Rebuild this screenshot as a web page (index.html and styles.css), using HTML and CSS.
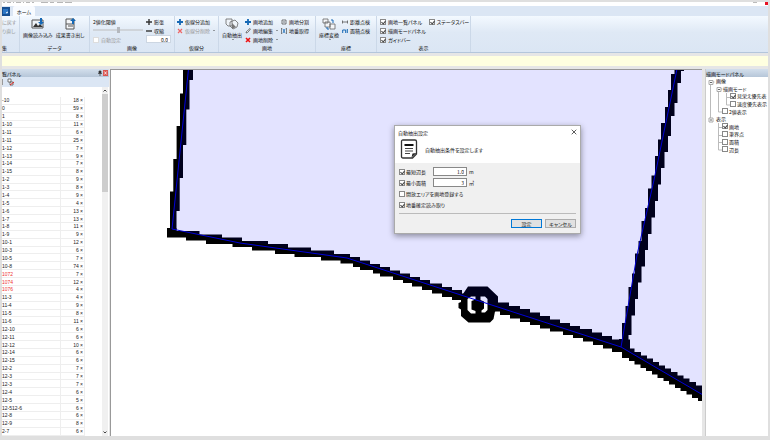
FILE: index.html
```html
<!DOCTYPE html>
<html lang="ja">
<head>
<meta charset="utf-8">
<title>自動抽出設定</title>
<link rel="stylesheet" href="styles.css">
</head>
<body>
<div class="app">
  <div class="titlebar">
    <svg class="title-marks" viewBox="0 0 72 2" aria-hidden="true"><path d="M1 .5h2M5 .5h4M11 .5h1M14 .5h5M21 .5h1M24 .5h4M30 .5h2M39 .5h7M48 .5h4M55 .5h6M63 .5h7" stroke="#888"/></svg>
    <span class="minimise"></span><span class="quit"></span>
  </div>
  <nav class="tabs"><button class="app-menu" aria-label="メニュー"><svg viewBox="0 0 8 9"><path d="M1 2h5v5H1z" fill="#2c76c5"/><path d="M4 6l2-1" stroke="#fff"/></svg></button><button class="tab">ホーム</button></nav>

  <div class="ribbon">
    <section class="group g-edit">
      <div class="stack faded"><button>に戻す</button><button>り直し</button></div>
      <h2>集</h2>
    </section>
    <section class="group g-data">
      <div class="tools">
        <button class="big"><svg viewBox="0 0 14 12"><path d="M1 2h11v8H1z" fill="#eef3f8" stroke="#555"/><path d="M2 9l3-4 2 3 2-2 3 3z" fill="#333"/><path d="M9 0h2v4h2l-3 3-3-3h2z" fill="#1769b5"/></svg>画像読み込み</button>
        <button class="big"><svg viewBox="0 0 14 12"><path d="M3 1h8v10H3z" fill="#f4f6f8" stroke="#555"/><path d="M3 6h8M5 8h5" stroke="#555"/><path d="M10 0l3 3h-2v3H9V3H7z" fill="#1769b5"/></svg>成果書き出し</button>
      </div>
      <h2>データ</h2>
    </section>
    <section class="group g-image">
      <div class="tools">
        <div class="stack slider-box"><label for="level">2値化閾値</label><input id="level" type="range" value="50"><label class="check faded"><input type="checkbox" disabled>自動設定</label></div>
        <div class="stack grow-box">
          <button><svg viewBox="0 0 6 6"><path d="M3 0v6M0 3h6" stroke="#333" stroke-width="1.4"/></svg>膨張</button>
          <button><svg viewBox="0 0 6 6"><path d="M0 3h6" stroke="#333" stroke-width="1.4"/></svg>収縮</button>
          <input class="spin" type="text" value="0.0" aria-label="値">
        </div>
      </div>
      <h2>画像</h2>
    </section>
    <section class="group g-line">
      <div class="stack">
        <button><svg viewBox="0 0 6 6"><path d="M3 0v6M0 3h6" stroke="#1769b5" stroke-width="1.8"/></svg>仮線分追加</button>
        <button class="faded"><svg viewBox="0 0 6 6"><path d="M1 1l4 4M5 1L1 5" stroke="#e66" stroke-width="1.2"/></svg>仮線分削除<i class="caret"></i></button>
      </div>
      <h2>仮線分</h2>
    </section>
    <section class="group g-lot">
      <div class="tools">
        <button class="big"><svg viewBox="0 0 14 12"><path d="M1 1h6v7H3L1 6zM5 4l5-2 3 3-1 4-4 2-3-3z" fill="#eef3f8" stroke="#666" stroke-width=".8"/><path d="M7 5v6l4-2z" fill="#777"/></svg>自動抽出<i class="caret"></i></button>
        <div class="stack">
          <button><svg viewBox="0 0 6 6"><path d="M3 0v6M0 3h6" stroke="#1769b5" stroke-width="1.8"/></svg>画地追加</button>
          <button><svg viewBox="0 0 6 6"><path d="M1 5l.5-1.500L5 .5l.6.6L2.500 4.600z" fill="#fff" stroke="#444" stroke-width=".7"/></svg>画地編集<i class="caret"></i></button>
          <button><svg viewBox="0 0 6 6"><path d="M1 1l4 4M5 1L1 5" stroke="#e11" stroke-width="1.6"/></svg>画地削除<i class="caret"></i></button>
        </div>
        <div class="stack">
          <button><svg viewBox="0 0 6 6"><path d="M3 0v6M2 1H1v4h1M4 1h1v4H4" fill="none" stroke="#555" stroke-width=".8"/></svg>画地分割</button>
          <button><svg viewBox="0 0 6 6"><path d="M1.500 0H.5v6h1M4.500 0h1v6h-1" fill="none" stroke="#555" stroke-width=".7"/><path d="M2 1l2 4M4 1L2 5" stroke="#1769b5" stroke-width=".8"/></svg>地番取得</button>
        </div>
      </div>
      <h2>画地</h2>
    </section>
    <section class="group g-coord">
      <div class="tools">
        <button class="big"><svg viewBox="0 0 14 12"><path d="M1 1h5v4H1zM3 4h5v5H3zM8 6h5v5H8z" fill="#f4f6f8" stroke="#666" stroke-width=".8"/><path d="M9 2h2v3M5 9v2h2" fill="none" stroke="#1769b5"/></svg>座標変換<i class="caret"></i></button>
        <div class="stack">
          <button><svg viewBox="0 0 6 6"><path d="M.5 1.500v3M5.500 1.500v3M.5 3h5" stroke="#555" stroke-width=".8"/></svg>距離点検</button>
          <button><svg viewBox="0 0 6 6"><path d="M.7 5V2h3v3M5.300 5V1" fill="none" stroke="#1769b5"/></svg>面積点検</button>
        </div>
      </div>
      <h2>座標</h2>
    </section>
    <section class="group g-view">
      <div class="tools">
        <div class="stack">
          <label class="check"><input type="checkbox" checked>画地一覧パネル</label>
          <label class="check"><input type="checkbox" checked>描画モードパネル</label>
          <label class="check"><input type="checkbox" checked>ガイドバー</label>
        </div>
        <div class="stack"><label class="check"><input type="checkbox" checked>ステータスバー</label></div>
      </div>
      <h2>表示</h2>
    </section>
  </div>
  <div class="guide"></div>

  <main class="work">
    <aside class="list-panel">
      <header class="panel-head"><span>覧パネル</span><svg viewBox="0 0 10 6"><path d="M1 1h2v2H1zM0 3.500h4M2 3.500V6" stroke="#333" stroke-width=".7" fill="#333"/><path d="M5 0h5v6H5z" fill="#d9534f"/><path d="M6.300 1.500l2.400 3M8.700 1.500l-2.400 3" stroke="#fff" stroke-width=".8"/></svg></header>
      <div class="list-tools"><svg viewBox="0 0 12 8"><path d="M.5 1v6" stroke="#999"/><path d="M6 1h3v3H6zM8 4h3v3H8z" fill="#fff" stroke="#555" stroke-width=".8"/><path d="M8 7l4-3" stroke="#d22"/></svg></div>
      <div class="list-body">
        <div class="sheet">
          <table>
            <tbody id="rows"></tbody>
          </table>
        </div>
        <div class="scroll"><svg viewBox="0 0 6 6"><path d="M1.500 4L3 2.500 4.500 4" fill="none" stroke="#444"/></svg><div class="thumb"></div><svg viewBox="0 0 6 6"><path d="M1.500 2L3 3.500 4.500 2" fill="none" stroke="#444"/></svg></div>
      </div>
    </aside>

    <section class="map">
      <svg class="drawing" viewBox="111 70 591 366" preserveAspectRatio="xMinYMin slice" aria-label="図面">
        <g class="ink">
          <path d="M183 69H193V80H189.500V109.500H186.300V145H183V178H179.700V211H176.500V232H170V191.500H173.300V159H176.600V126H180V93.500H183Z"/>
          <path d="M167 228H176.500V231H199.500V234.500H222V237.500H242V241H268V244H288V247.500H311V250.500H334V254H350V257H360V260.500H370V264H380V267H390V270.500H400V273.500H410V277H420V280H430V283.500H442V287H452V290H462V293.500H467V300H452V297H442V293.500H432V290H422V286.500H412V283H403V280H393V276.500H380V273.500H373V270H360V267H353V263.500H340.500V260.500H321V257H294.500V254H275V250.500H252V247H232.500V244H206V240.500H186V237.500H167Z"/>
          <path d="M493 299H498V302.500H509V306H520V309H530V312.500H540V316H550V319.500H560V323H570V326H580V329H592V332.500H602V336H612V339.500H630V352H612V348.500H603V345H593V341.500H583V338H573V335H563V331.500H550V328.500H540V325H530V322H520V318.500H510V315H500V311.500H493Z"/>
          <path d="M674.500 69H684V71H681V83H677.500V103H674.500V116H671V136H668V152H664.500V168H661V184.500H658V201H655V217.500H651.500V234H648V250H645V266.500H641.500V282.500H638V299H635V315.500H631.500V335H628.500V352H619V339H622V323H625.500V306H628.500V287H632V273.500H635V253.500H638.500V241H641.500V221H645V208H648V188.500H651.500V175.500H655V156H658V139.500H661V123H665V107H668V90H671V74H674.500Z"/>
          <path d="M622 345H628.500V348.500H634.500V352H641V355.500H647V358.500H653V362H659V365.500H665V368.500H671V372H677.500V375.500H683.500V378.500H689.500V382H696V385.500H703V401H698V398H692V394.500H686.500V391H680.500V388H675V384.500H669V381H663.500V378H657.500V374.500H652V371H646V368H640.500V364.500H634.500V361H629V358H622Z"/>
          <path fill-rule="evenodd" d="M468 286.500H487.500L498 296.500V303L499 308L495 311.500L493.500 319L490 322.500H468.500L461 316V309.500L458.500 308V303L461 302V297ZM467.500 299L471 296.500H475.500V299.500L471.500 301V309.500L475.500 311V313.500H471L467.500 310ZM480.500 296.500H485L487.500 299V310L485 312.500H481.500V310.500L484 308.500V301.500L480.500 300Z"/>
        </g>
        <path class="lot" d="M188 69L172 229L350 259L621 347L703 395V69Z"/>
        <path class="edge" d="M188.500 69L172 229L240 243L347 258L470 298L621 347L703 395M677 69L654 180L637 255L621 347"/>
      </svg>
      <form class="dialog" role="dialog" aria-label="自動抽出設定">
        <header class="dialog-head">
          <div class="dialog-title"><span>自動抽出設定</span><button type="button" class="close" aria-label="閉じる"><svg viewBox="0 0 6 6"><path d="M.7.7l4.600 4.600M5.300.7L.7 5.300" stroke="#333" stroke-width=".8"/></svg></button></div>
          <div class="intro"><svg viewBox="0 0 18 20"><path d="M3 1h12q1.500 0 1.500 1.500V15l-4 4H3q-1.500 0-1.500-1.500v-15Q1.500 1 3 1z" fill="#fff" stroke="#333" stroke-width="1.300"/><path d="M4.500 5h9v2h-9z" fill="#111"/><path d="M5 9.500h8M5 12h8M5 14.500h5" stroke="#444"/><path d="M11.500 18.500l1-4 4-.5z" fill="#222"/></svg><p>自動抽出条件を設定します</p></div>
        </header>
        <div class="fields">
          <div class="row"><label class="check"><input type="checkbox" checked>最短辺長</label><input class="value" type="text" value="1.0" aria-label="最短辺長"><span>m</span></div>
          <div class="row"><label class="check"><input type="checkbox" checked>最小面積</label><input class="value" type="text" value="3" aria-label="最小面積"><span>㎡</span></div>
          <div class="row"><label class="check"><input type="checkbox">開放エリアを画地登録する</label></div>
          <div class="row"><label class="check"><input type="checkbox" checked>地番確定読み取り</label></div>
        </div>
        <footer class="actions"><button type="button" class="primary">設定</button><button type="button">キャンセル</button></footer>
      </form>
    </section>

    <aside class="mode-panel">
      <header class="panel-head"><span>描画モードパネル</span></header>
      <div class="tree">
        <svg class="twigs" viewBox="0 0 62 76" aria-hidden="true"><path d="M4.500 5v38M4.500 5h4M12.500 12v23h4M12.500 12h4M20.500 16v12h4M20.500 20.500h4M12.500 46v27h4M12.500 50.500h4M12.500 58.500h4M12.500 65.500h4" fill="none" stroke="#bbb"/><path d="M3 3.500h4v4H3zM11 10.500h4v4h-4zM3 41h4v4H3z" fill="#fff" stroke="#aaa"/><path d="M4 5.500h2M12 12.500h2M4 43h2" stroke="#666"/></svg>
        <div class="node l1">画像</div>
        <div class="node l2">描画モード</div>
        <label class="node l4 check"><input type="checkbox" checked>見栄え優先表</label>
        <label class="node l4 check"><input type="checkbox">速度優先表示</label>
        <label class="node l3 check"><input type="checkbox">2値表示</label>
        <div class="node l1">表示</div>
        <label class="node l3 check"><input type="checkbox" checked>画地</label>
        <label class="node l3 check"><input type="checkbox">筆界点</label>
        <label class="node l3 check"><input type="checkbox">面積</label>
        <label class="node l3 check"><input type="checkbox">辺長</label>
      </div>
    </aside>
  </main>
</div>
<script src="rows.js"></script>
</body>
</html>
```
FILE: styles.css
```css
* { box-sizing: border-box; }
body {
  margin: 0;
  height: 100vh;
  padding: 2px 2px 4px;
  overflow: hidden;
  background: #dfdfdf;
  color: #111;
  font: 5px/7px "Noto Sans CJK JP", sans-serif;
  font-feature-settings: "palt";
}
h2, p { margin: 0; font-size: 5px; font-weight: 400; }
button, input { font: inherit; color: inherit; margin: 0; padding: 0; }
button { border: 0; background: none; white-space: nowrap; }
.app { height: 100%; display: flex; flex-direction: column; background: #e6e6e6; }

.titlebar { height: 4px; background: #fff; display: flex; gap: 8px; align-items: flex-start; }
.title-marks { width: 72px; height: 2px; margin-right: auto; opacity: .6; }
.minimise { width: 4px; height: 1px; background: #bbb; }
.quit { width: 3px; height: 3px; background: #e81123; }

.tabs { height: 10px; display: flex; align-items: flex-end; background: #dbe6f4; }
.app-menu { width: 8px; height: 9px; background: #174f91; display: flex; }
.app-menu svg { width: 8px; height: 9px; }
.tab { margin-left: 3px; width: 22px; height: 10px; background: #f8fbff; border-radius: 2px 2px 0 0; }

.ribbon { height: 37px; display: flex; background: linear-gradient(#f3f9ff, #dfe9f5 45%, #dbe6f4); border-bottom: 1px solid #b4c6db; }
.group { display: flex; flex-direction: column; justify-content: space-between; padding: 1px 3px; border-right: 1px solid #cbd8e8; white-space: nowrap; }
.group h2 { text-align: center; line-height: 7px; }
.g-edit { width: 18px; padding-left: 0; }
.g-edit h2 { text-align: left; }
.g-data { width: 70px; }
.g-image { width: 85px; }
.g-line { width: 44px; padding: 1px 2px; }
.g-lot { width: 97px; }
.g-coord { width: 61px; }
.g-view { width: 94px; }
.tools { display: flex; gap: 3px; }
.stack { display: flex; flex-direction: column; align-items: flex-start; }
.stack button, .stack label { height: 9px; display: flex; align-items: center; gap: 2px; }
.stack button svg { width: 6px; height: 6px; }
.faded { color: #999; }
.big { display: flex; flex-direction: column; align-items: center; }
.big svg { width: 14px; height: 12px; margin: 1px 0; }
.caret { border: 1px solid transparent; border-top-color: #444; margin: 1px 0 0 1px; }
.check { display: flex; align-items: center; gap: 1px; white-space: nowrap; }
.check input { appearance: none; position: relative; width: 6px; height: 6px; flex: none; border: 1px solid #888; background: #fff; }
.check input:disabled { border-color: #ddd; }
.check input:checked::after { content: ""; position: absolute; left: 1px; top: 0; width: 2px; height: 3px; border: solid #444; border-width: 0 1px 1px 0; transform: rotate(40deg); }
.slider-box { width: 51px; }
.slider-box input[type="range"] { appearance: none; width: 50px; height: 2px; margin: 3px 0 4px; background: #cfd4da; }
.slider-box input[type="range"]::-webkit-slider-thumb { appearance: none; width: 3px; height: 6px; background: #b4b8be; }
.spin { width: 25px; height: 8px; border: 1px solid #ccd6e2; background: #fff; text-align: right; padding-right: 2px; }
.guide { height: 10px; margin: 3px 0; background: #ffffe0; }

.work { flex: 1; min-height: 0; display: flex; }
.panel-head { height: 8px; flex: none; display: flex; justify-content: space-between; align-items: center; background: linear-gradient(#d3dfec, #b6c6d8); padding-right: 1px; white-space: nowrap; }
.panel-head svg { width: 10px; height: 6px; }
.list-panel { width: 107px; flex: none; display: flex; flex-direction: column; background: #fff; }
.list-tools { height: 10px; background: #dbe6f4; display: flex; align-items: center; }
.list-tools svg { width: 12px; height: 8px; }
.list-body { flex: 1; min-height: 0; display: flex; }
.sheet { flex: 1; padding-top: 10px; }
table { width: 83px; height: 100%; border-collapse: collapse; table-layout: fixed; font: 5px/6px "Liberation Sans", sans-serif; }
td { padding: 0; border-bottom: 1px solid #eee; border-right: 1px solid #eee; white-space: nowrap; color: #222; }
td:first-child { width: 58px; }
td:last-child { text-align: right; padding-right: 1px; }
.alert td:first-child { color: #e33; }
.scroll { width: 6px; margin-right: 1px; background: #f0f0f0; display: flex; flex-direction: column; }
.scroll svg { width: 6px; height: 7px; }
.thumb { height: 28%; margin-bottom: auto; background: #cdcdcd; }

.map { position: relative; flex: 1; min-width: 0; margin-left: 1px; border: solid #999; border-width: 1px 0 0 1px; background: #fff; overflow: hidden; }
.drawing { display: block; width: 100%; height: 100%; }
.ink { fill: #000; }
.lot { fill: rgb(0 0 255 / 11%); }
.edge { fill: none; stroke: #0000d8; stroke-width: 1; }

.dialog { position: absolute; left: 283px; top: 55px; width: 187px; background: #f0f0f0; border: 1px solid #aaa; box-shadow: 0 2px 6px rgb(0 0 0 / 40%); }
.dialog-head { height: 37px; background: #fff; padding: 2px 3px; }
.dialog-title { display: flex; justify-content: space-between; align-items: center; height: 8px; }
.close { width: 6px; height: 6px; display: flex; }
.intro { display: flex; align-items: center; gap: 7px; padding: 3px 2px; }
.intro svg { width: 18px; height: 20px; }
.fields { margin: 0 4px; padding: 3px 0; border-bottom: 1px solid #bbb; }
.row { height: 11px; display: flex; align-items: center; gap: 2px; }
.row .check:not(:only-child) { width: 32px; }
.value { width: 34px; height: 9px; border: 1px solid #888; background: #fff; text-align: right; padding-right: 2px; }
.actions { display: flex; justify-content: flex-end; gap: 3px; padding: 5px 4px; }
.actions button { width: 31px; height: 9px; background: #e1e1e1; border: 1px solid #adadad; line-height: 7px; }
.actions .primary { border-color: #0078d7; }

.mode-panel { width: 63px; flex: none; margin-left: 3px; background: #fff; border-left: 1px solid #ccc; overflow: hidden; }
.tree { position: relative; height: 76px; display: grid; grid-auto-rows: 1fr; }
.twigs { position: absolute; width: 62px; height: 76px; }
.node { position: relative; display: flex; align-items: center; white-space: nowrap; }
.l1 { padding-left: 10px; }
.l2 { padding-left: 17px; }
.l3 { padding-left: 16px; }
.l4 { padding-left: 24px; }
```
FILE: rows.js
```js
const lots = [
  ["-10", 18], ["0", 59], ["1", 8], ["1-10", 11], ["1-11", 6], ["1-11", 25], ["1-12", 7], ["1-13", 9],
  ["1-14", 7], ["1-15", 8], ["1-2", 9], ["1-3", 8], ["1-4", 9], ["1-5", 4], ["1-6", 13], ["1-7", 13],
  ["1-8", 11], ["1-9", 9], ["10-1", 12], ["10-3", 6], ["10-5", 7], ["10-8", 74], ["1072", 7], ["1074", 12],
  ["1076", 4], ["11-3", 4], ["11-4", 9], ["11-5", 8], ["11-6", 11], ["12-10", 6], ["12-11", 6], ["12-12", 10],
  ["12-14", 6], ["12-15", 6], ["12-2", 7], ["12-3", 7], ["12-3", 7], ["12-4", 6], ["12-5", 5], ["12-512-6", 6],
  ["12-8", 6], ["12-9", 8], ["2-7", 6]
];
const body = document.getElementById("rows");
for (const [name, count] of lots) {
  const row = body.insertRow();
  if (/^10\d\d$/.test(name)) row.className = "alert";
  row.insertCell().textContent = name;
  row.insertCell().textContent = `${count} ×`;
}
```
